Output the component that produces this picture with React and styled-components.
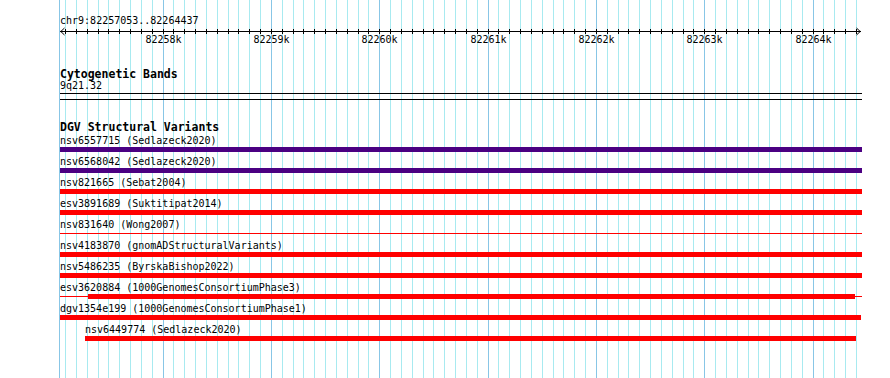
import React from "react";
import styled, { createGlobalStyle } from "styled-components";

const START = 82257053;
const END = 82264437;
const X0 = 60.5;
const SCALE = 0.10833;
const LEFT = 60;
const WIDTH = 802;

const MINOR = "#a8eaf0";
const MAJOR = "#88c6e6";

const GlobalStyle = createGlobalStyle`
  html, body { margin: 0; padding: 0; background: #ffffff; }
  #root { width: 890px; }
`;

const Page = styled.div`
  position: relative;
  width: 890px;
  height: 378px;
  overflow: hidden;
  background: #ffffff;
  font-family: "DejaVu Sans Mono", "Liberation Mono", monospace;
  color: #000;
`;

const GridLayer = styled.div`
  position: absolute;
  inset: 0;
  z-index: 0;
  pointer-events: none;
`;

const GridLine = styled.div`
  position: absolute;
  top: 0;
  bottom: 0;
  width: 1px;
  background: ${(p) => (p.$major ? MAJOR : MINOR)};
`;

const Content = styled.div`
  position: relative;
  z-index: 1;
  width: ${WIDTH}px;
  padding: 15px 28px 0 ${LEFT}px;
`;

const MonoText = styled.div`
  font-size: 10px;
  line-height: 12px;
  height: 12px;
  white-space: nowrap;
`;

const LocusLabel = styled(MonoText)``;

const ScaleBar = styled.div`
  position: relative;
  height: 21px;
`;

const RulerSvg = styled.svg`
  display: block;
  width: ${WIDTH}px;
  height: 9px;
`;

const ScaleLabel = styled(MonoText)`
  position: absolute;
  top: 7px;
  transform: translateX(-50%);
`;

const CytoTrack = styled.section`
  margin-top: 20px;
  padding-bottom: 1px;
  border-bottom: 1px solid #000;
`;

const TrackTitle = styled.div`
  font-size: 11.5px;
  font-weight: bold;
  line-height: 12px;
  height: 12px;
  white-space: nowrap;
  margin-bottom: ${(p) => p.$gap || 0}px;
`;

const VariantTrack = styled.section`
  margin-top: 5px;
  border-top: 1px solid #000;
  padding-top: 21px;
`;

const FeatureRow = styled.div`
  height: 21px;
`;

const FeatureLabel = styled(MonoText)``;

const BarLane = styled.div`
  display: flex;
  align-items: center;
  height: 5px;
`;

const ThickSeg = styled.div`
  flex: none;
  height: 5px;
  background: ${(p) => p.$color};
`;

const ThinSeg = styled.div`
  flex: none;
  height: 1px;
  background: ${(p) => p.$color};
`;

const PURPLE = "#4b0082";
const RED = "#ff0000";

const features = [
  { name: "nsv6557715", src: "Sedlazeck2020", color: PURPLE, parts: [["thick", 60, 862]] },
  { name: "nsv6568042", src: "Sedlazeck2020", color: PURPLE, parts: [["thick", 60, 862]] },
  { name: "nsv821665", src: "Sebat2004", color: RED, parts: [["thick", 60, 862]] },
  { name: "esv3891689", src: "Suktitipat2014", color: RED, parts: [["thick", 60, 862]] },
  { name: "nsv831640", src: "Wong2007", color: RED, parts: [["thin", 60, 862]] },
  { name: "nsv4183870", src: "gnomADStructuralVariants", color: RED, parts: [["thick", 60, 862]] },
  { name: "nsv5486235", src: "ByrskaBishop2022", color: RED, parts: [["thick", 60, 862]] },
  {
    name: "esv3620884",
    src: "1000GenomesConsortiumPhase3",
    color: RED,
    parts: [
      ["thin", 60, 88],
      ["thick", 88, 855],
      ["thin", 855, 862],
    ],
  },
  { name: "dgv1354e199", src: "1000GenomesConsortiumPhase1", color: RED, parts: [["thick", 60, 861]] },
  { name: "nsv6449774", src: "Sedlazeck2020", color: RED, parts: [["thick", 85, 856]] },
];

const bpToX = (bp) => Math.floor(X0 + (bp - START) * SCALE);

const gridLines = [{ x: 59, major: true }];
for (let bp = 82257100; bp <= 82264400; bp += 100) {
  gridLines.push({ x: bpToX(bp), major: bp % 1000 === 0, bp });
}
const majors = gridLines.filter((g) => g.bp && g.major);

function Ruler() {
  return (
    <ScaleBar>
      <RulerSvg viewBox={`0 0 ${WIDTH} 9`}>
        <line x1="0" y1="4.5" x2="801" y2="4.5" stroke="#000" strokeWidth="1" shapeRendering="crispEdges" />
        {gridLines
          .filter((g) => g.bp)
          .map((g) => (
            <line
              key={g.bp}
              x1={g.x - LEFT + 0.5}
              x2={g.x - LEFT + 0.5}
              y1="2"
              y2="7"
              stroke="#000"
              strokeWidth="1"
              shapeRendering="crispEdges"
            />
          ))}
        <polyline points="4.5,1 0.8,4.5 4.5,8" fill="none" stroke="#000" strokeWidth="1" />
        <polyline points="796.5,1 800.2,4.5 796.5,8" fill="none" stroke="#000" strokeWidth="1" />
      </RulerSvg>
      {majors.map((g) => (
        <ScaleLabel key={g.bp} style={{ left: g.x - LEFT + 0.5 }}>
          {Math.round(g.bp / 1000)}k
        </ScaleLabel>
      ))}
    </ScaleBar>
  );
}

function Feature({ f }) {
  const first = f.parts[0][1];
  return (
    <FeatureRow>
      <FeatureLabel style={{ marginLeft: first - LEFT }}>
        {f.name} ({f.src})
      </FeatureLabel>
      <BarLane style={{ paddingLeft: first - LEFT }}>
        {f.parts.map(([kind, a, b], i) =>
          kind === "thick" ? (
            <ThickSeg key={i} $color={f.color} style={{ width: b - a }} />
          ) : (
            <ThinSeg key={i} $color={f.color} style={{ width: b - a }} />
          )
        )}
      </BarLane>
    </FeatureRow>
  );
}

export default function App() {
  return (
    <>
      <GlobalStyle />
      <Page>
        <GridLayer>
          {gridLines.map((g, i) => (
            <GridLine key={i} $major={g.major} style={{ left: g.x }} />
          ))}
        </GridLayer>
        <Content>
          <LocusLabel>
            chr9:{START}..{END}
          </LocusLabel>
          <Ruler />
          <CytoTrack>
            <TrackTitle>Cytogenetic Bands</TrackTitle>
            <MonoText>9q21.32</MonoText>
          </CytoTrack>
          <VariantTrack>
            <TrackTitle $gap={2}>DGV Structural Variants</TrackTitle>
            {features.map((f) => (
              <Feature key={f.name} f={f} />
            ))}
          </VariantTrack>
        </Content>
      </Page>
    </>
  );
}
